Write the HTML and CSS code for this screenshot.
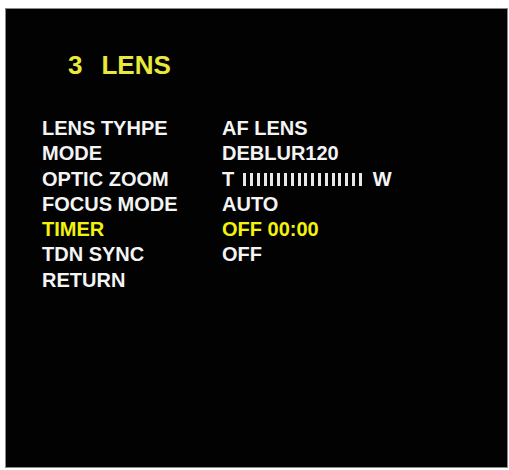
FILE: index.html
```html
<!DOCTYPE html>
<html>
<head>
<meta charset="utf-8">
<link rel="stylesheet" href="styles.css">
</head>
<body>
<div class="screen">
  <div class="title"><span class="num">3</span>LENS</div>
  <div class="menu">
    <div class="label">LENS TYHPE</div><div class="value">AF LENS</div>
    <div class="label">MODE</div><div class="value">DEBLUR120</div>
    <div class="label">OPTIC ZOOM</div>
    <div class="value zoom">
      <span>T</span>
      <span class="bar">
        <i></i><i></i><i></i><i></i><i></i><i></i><i></i><i></i><i></i>
        <i></i><i></i><i></i><i></i><i></i><i></i><i></i><i></i><i></i>
      </span>
      <span>W</span>
    </div>
    <div class="label">FOCUS MODE</div><div class="value">AUTO</div>
    <div class="label sel">TIMER</div><div class="value sel">OFF 00:00</div>
    <div class="label">TDN SYNC</div><div class="value">OFF</div>
    <div class="label">RETURN</div><div class="value"></div>
  </div>
</div>
</body>
</html>
```
FILE: styles.css
```css
html, body {
  margin: 0;
  padding: 0;
  background: #ffffff;
}
body {
  padding: 8px 0 0 5px;
}
.screen {
  box-sizing: border-box;
  width: 503px;
  height: 460px;
  background: #020202;
  border: 1px solid #8a8a8a;
  padding: 41px 0 0 0;
  font-family: "Liberation Sans", Arial, sans-serif;
  font-weight: bold;
  color: #f4f4f4;
}
.title {
  padding-left: 62px;
  font-size: 26px;
  line-height: 30px;
  color: #e9e93c;
}
.title .num {
  margin-right: 19px;
}
.menu {
  margin-top: 36px;
  padding-left: 36px;
  display: grid;
  grid-template-columns: 180px auto;
  font-size: 20px;
  line-height: 25.3px;
}
.sel {
  color: #f2f20c;
}
.zoom {
  display: flex;
  align-items: center;
}
.bar {
  display: flex;
  gap: 3.8px;
  margin: 1px 11px 0 9px;
}
.bar i {
  display: block;
  width: 3px;
  height: 13px;
  background: #e8e8e8;
}
```
